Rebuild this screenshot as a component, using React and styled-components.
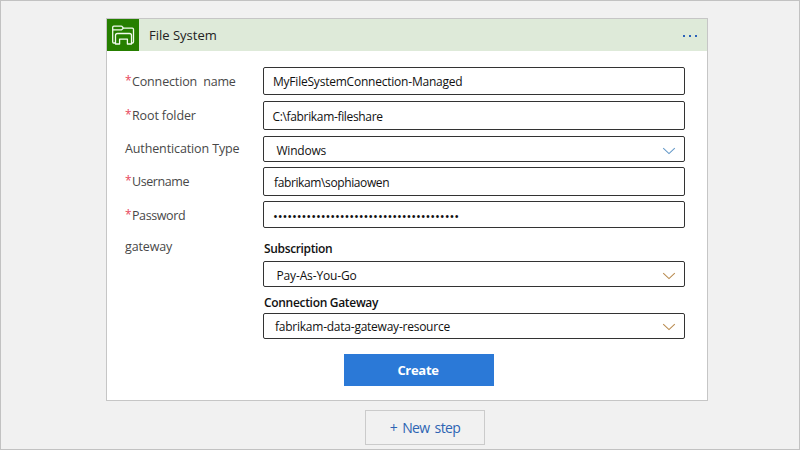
import React from "react";
import styled, { createGlobalStyle } from "styled-components";

const Global = createGlobalStyle`
  *, *::before, *::after { box-sizing: border-box; }
  body { margin: 0; font-family: "Open Sans", "Noto Sans", sans-serif; }
`;

const Canvas = styled.main`
  width: 800px;
  height: 450px;
  padding-top: 17px;
  display: flex;
  flex-direction: column;
  background: #f1f1f1;
  border: 1px solid #c2c2c2;
  overflow: hidden;
`;

const Card = styled.section`
  width: 602px;
  height: 383px;
  margin-left: 105px;
  flex: none;
  background: #fff;
  border: 1px solid #c6c6c6;
`;

const Header = styled.header`
  height: 32px;
  display: flex;
  align-items: center;
  background: #deead9;
`;

const IconTile = styled.div`
  width: 32px;
  height: 32px;
  background: #267f00;
`;

const Text = styled.span`
  display: block;
  white-space: pre;
  line-height: 18px;
  font-size: ${(p) => p.$size || 12}px;
  font-weight: ${(p) => p.$weight || 400};
  letter-spacing: ${(p) => p.$track || 0}px;
  word-spacing: ${(p) => p.$word || 0}px;
  color: ${(p) => p.$color || "#111"};
`;

const Title = styled(Text)`
  margin-left: 10px;
  flex: 1;
`;

const MoreButton = styled.button`
  width: 17px;
  height: 10px;
  margin-right: 8px;
  padding: 2px 0 0;
  border: 0;
  background: none;
  display: flex;
  align-items: center;
  svg { display: block; }
`;

const Form = styled.div`
  padding: 16px 22px 0 18px;
  display: flex;
  flex-direction: column;
`;

const Row = styled.div`
  display: grid;
  grid-template-columns: 138px 422px;
  align-items: center;
  height: ${(p) => p.$height}px;
  margin-bottom: ${(p) => p.$gap}px;
`;

const Label = styled.label`
  display: flex;
  align-items: center;
  padding-top: ${(p) => p.$drop || 0}px;
`;

const Star = styled.span`
  width: 7px;
  padding-bottom: 2px;
  font-size: 12px;
  line-height: 16px;
  color: #e8485c;
`;

const Field = styled.div`
  height: ${(p) => p.$height}px;
  padding: ${(p) => p.$drop || 0}px 8px 0 ${(p) => p.$indent}px;
  display: flex;
  align-items: center;
  justify-content: space-between;
  background: #fff;
  border: 1px solid #333;
  border-radius: 2px;
`;

const Stack = styled.div`
  margin: 4px 0 0 138px;
  display: flex;
  flex-direction: column;
`;

const GroupRow = styled.div`
  display: grid;
  grid-template-columns: 138px 422px;
  height: 24px;
`;

const Caption = styled.div`
  padding-left: ${(p) => p.$indent}px;
  padding-top: ${(p) => p.$drop}px;
  height: ${(p) => p.$height}px;
`;

const CreateButton = styled.button`
  width: 150px;
  height: 32px;
  margin: 15px 0 0 219px;
  padding: 0 2px 0 0;
  border: 0;
  background: #2b79d7;
  display: flex;
  align-items: center;
  justify-content: center;
  font-family: inherit;
`;

const NewStep = styled.button`
  width: 120px;
  height: 35px;
  flex: none;
  margin: 9px 0 0 364px;
  padding: 0;
  border: 1px solid #cbcbcb;
  background: #f1f1f1;
  display: flex;
  align-items: center;
  justify-content: center;
  font-family: inherit;
`;

const Chevron = ({ color }) => (
  <svg width="14" height="8" viewBox="0 0 14 8" fill="none">
    <path d="M1.2 1.2 7 6.6l5.800-5.400" stroke={color} strokeWidth="1.1" />
  </svg>
);

const FolderIcon = () => (
  <svg width="32" height="32" viewBox="0 0 32 32" fill="none" stroke="#f2fbef" strokeWidth="1.3" strokeLinejoin="round">
    <path d="M8.500 24H6.700q-1 0-1-1V8.300q0-1.100 1.100-1.100h7.400q.8 0 1.300.8l.9 1.200h8.900q1.200 0 1.200 1.200V22.800q0 1.200-1.200 1.200h-.8" />
    <path d="M5.700 10.900h8.600l2.100-1.600" />
    <path d="M8.500 25V16.500q0-2 2-2h12q2 0 2 2V25H20.400V20.200H12.600V25z" />
  </svg>
);

const labelColor = "#484848";

function FormRow({ label, value, height, gap, required, labelDrop, labelTrack, labelWord, track, size, indent, drop, select }) {
  return (
    <Row $height={height} $gap={gap}>
      <Label $drop={labelDrop}>
        {required && <Star>*</Star>}
        <Text $size={12.5} $track={labelTrack} $word={labelWord} $color={labelColor}>{label}</Text>
      </Label>
      <Field $height={height} $indent={indent} $drop={drop}>
        <Text $track={track} $size={size}>{value}</Text>
        {select && <Chevron color="#6599c8" />}
      </Field>
    </Row>
  );
}

export default function App() {
  return (
    <>
      <Global />
      <Canvas>
        <Card>
          <Header>
            <IconTile><FolderIcon /></IconTile>
            <Title $size={13} $color="#222">File System</Title>
            <MoreButton aria-label="More">
              <svg width="17" height="4" viewBox="0 0 17 4" fill="#2b62b9">
                <rect x="1" y="1" width="2" height="2" />
                <rect x="7" y="1" width="2" height="2" />
                <rect x="13" y="1" width="2" height="2" />
              </svg>
            </MoreButton>
          </Header>
          <Form>
            <FormRow required label="Connection name" value="MyFileSystemConnection-Managed" height={28} gap={6} indent={9} drop={1} labelDrop={2} labelTrack={-0.15} labelWord={3} track={-0.22} />
            <FormRow required label="Root folder" value="C:\fabrikam-fileshare" height={29} gap={6} indent={8.500} drop={2} labelTrack={-0.12} track={-0.34} />
            <FormRow label="Authentication Type" value="Windows" height={26} gap={5} indent={12.500} drop={3} labelTrack={-0.12} track={-0.22} select />
            <FormRow required label="Username" value="fabrikam\sophiaowen" height={29} gap={5} indent={10} drop={2} labelDrop={1} labelTrack={-0.42} track={-0.38} />
            <FormRow required label="Password" value={"•".repeat(39)} height={27} gap={5} indent={9} drop={3} labelDrop={2} labelTrack={-0.4} size={13} track={-0.12} />
            <GroupRow>
              <Caption $drop={5}><Text $size={12.5} $track={-0.12} $color={labelColor}>gateway</Text></Caption>
              <Caption $indent={1} $drop={7}><Text $weight={600} $track={-0.35}>Subscription</Text></Caption>
            </GroupRow>
            <Stack>
              <Field $height={26} $indent={12.500} $drop={3}><Text $track={-0.15}>Pay-As-You-Go</Text><Chevron color="#b98b4f" /></Field>
              <Caption $indent={1} $drop={7} $height={26}><Text $weight={600} $track={-0.31}>Connection Gateway</Text></Caption>
              <Field $height={26} $indent={11} $drop={2}><Text $track={-0.24}>fabrikam-data-gateway-resource</Text><Chevron color="#b98b4f" /></Field>
            </Stack>
            <CreateButton><Text $size={13} $weight={700} $track={-0.3} $color="#fff">Create</Text></CreateButton>
          </Form>
        </Card>
        <NewStep><Text $size={14} $track={-0.6} $word={2} $color="#2d64b3">+ New step</Text></NewStep>
      </Canvas>
    </>
  );
}
